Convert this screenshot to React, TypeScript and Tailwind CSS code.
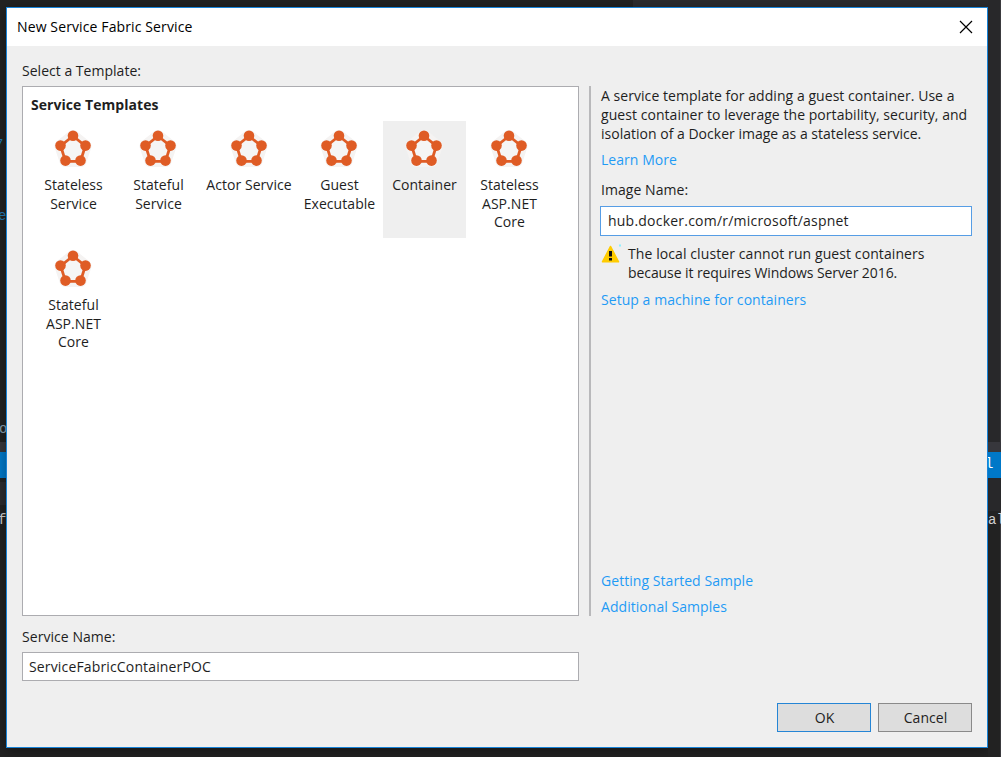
import type { ReactNode } from "react";

const templates = [
    { lines: ["Stateless", "Service"] },
    { lines: ["Stateful", "Service"] },
    { lines: ["Actor Service"], wide: true },
    { lines: ["Guest", "Executable"] },
    { lines: ["Container"], selected: true },
    { lines: ["Stateless", "ASP.NET", "Core"] },
    { lines: ["Stateful", "ASP.NET", "Core"] },
];

function FabricIcon() {
    return (
        <svg width="39" height="39" viewBox="0 0 39 39" className="block">
            <path
                d="M19 6 L31.5 16 L26.5 31 H11.5 L6.5 16 Z"
                fill="#f5f5f5"
                stroke="#f5f3f2"
                strokeWidth="12"
                strokeLinejoin="round"
            />
            <path d="M19 6 L31.3 16 L26.5 31.4 H11.5 L6.7 16 Z" fill="#f5f5f5" stroke="#df5c25" strokeWidth="2.8" />
            <g fill="#df5c25">
                <circle cx="19" cy="5.8" r="5.3" />
                <circle cx="31.5" cy="15.6" r="5.3" />
                <circle cx="26.5" cy="30.6" r="5.3" />
                <circle cx="11.5" cy="30.6" r="5.3" />
                <circle cx="6.5" cy="15.6" r="5.3" />
            </g>
        </svg>
    );
}

function WarningIcon() {
    return (
        <svg width="20" height="20" viewBox="0 0 20 20" className="-mt-px block shrink-0">
            <path d="M9.5 2.4 L17.6 17.8 H1.4 Z" fill="#fc0" stroke="#fc0" strokeWidth="1.4" strokeLinejoin="round" />
            <path d="M8 7 h3 v5.6 h-3 Z M8 14 h3 v2.4 h-3 Z" fill="#111" />
            <rect x="18" y="0.5" width="2" height="2" fill="#8ff0ff" />
        </svg>
    );
}

function Link({ children, className }: { children: ReactNode; className: string }) {
    return (
        <a href="#" className={`block w-fit whitespace-nowrap text-[#1f9bf5] ${className}`}>
            {children}
        </a>
    );
}

export default function App() {
    return (
        <div className="flex h-[757px] w-[1001px] overflow-hidden bg-[#222] bg-[linear-gradient(90deg,#222_633px,#2b2b2d_633px)] bg-[length:100%_442px] bg-no-repeat font-['Open_Sans','Noto_Sans',sans-serif] text-[14px] leading-[18.75px] tracking-[0.05px] text-[#1e1e1e]">
            {/* Editor showing on the left */}
            <div className="flex w-[6px] shrink-0 flex-col overflow-hidden font-['Liberation_Mono',monospace] text-[14px] leading-[18px]">
                <div className="flex h-[136px] shrink-0" />
                <span className="-ml-[5px] h-[71px] shrink-0 text-[#207ab5]">7</span>
                <span className="-ml-[2px] h-[213px] shrink-0 text-[#207ab5]">e</span>
                <span className="-ml-[1px] h-[22px] shrink-0 text-[#8aa0b0]">o</span>
                <div className="h-[10px] shrink-0 bg-[#37373c]" />
                <div className="h-[26px] shrink-0 bg-[#0078c8]" />
                <div className="h-[4px] shrink-0 bg-[#222]" />
                <div className="h-[23px] shrink-0 bg-[#2b2b2e]" />
                <span className="-ml-[2px] mt-[6px] text-[#d0d0d0]">f</span>
            </div>

            <div className="mt-[7px] flex h-[741px] w-[982px] shrink-0 flex-col border border-[#1883d7] bg-[#efefef] shadow-[0_3px_12px_rgba(0,0,0,0.35)]">
                <header className="flex h-[38px] shrink-0 items-center justify-between bg-white pl-[10px] pr-[14px] text-black">
                    <h1 className="tracking-[0.12px]">New Service Fabric Service</h1>
                    <svg width="14" height="14" viewBox="0 0 14 14" stroke="#000" strokeWidth="1.2">
                        <path d="M1 1 L13 13 M13 1 L1 13" />
                    </svg>
                </header>

                <div className="flex grow">
                    <section className="ml-[15px] flex w-[557px] shrink-0 flex-col pt-[16px]">
                        <h2 className="h-[24px] tracking-[0.02px]">Select a Template:</h2>
                        <div className="h-[530px] shrink-0 border border-[#acacb0] bg-white pl-[8px] pt-[9px]">
                            <h3 className="font-bold tracking-[0.05px]">Service Templates</h3>
                            <div className="mt-[6px] flex flex-wrap">
                                {templates.map(({ lines, wide, selected }) => (
                                    <div
                                        key={lines.join(" ")}
                                        className={`mx-px mb-[3px] flex h-[117px] flex-col items-center pt-[9px] ${wide ? "w-[94px]" : "w-[83px]"} ${selected ? "bg-[#efefef]" : ""}`}
                                    >
                                        <FabricIcon />
                                        <div className="mt-[7px] text-center">
                                            {lines.map((line) => (
                                                <div key={line} className="whitespace-nowrap">{line}</div>
                                            ))}
                                        </div>
                                    </div>
                                ))}
                            </div>
                        </div>
                        <label className="mt-[12px] h-[24px]">Service Name:</label>
                        <div className="flex h-[29px] shrink-0 items-center border border-[#acacb0] bg-white pl-[6px] pt-px tracking-[0.15px]">
                            ServiceFabricContainerPOC
                        </div>
                    </section>

                    <div className="ml-[10px] mt-[40px] h-[530px] w-[2px] shrink-0 bg-[#b9b9bb]" />

                    <section className="ml-[9px] flex w-[372px] shrink-0 flex-col pt-[41px]">
                        <p className="h-[64px] whitespace-nowrap pl-px">
                            A service template for adding a guest container. Use a<br />
                            guest container to leverage the portability, security, and<br />
                            <span className="tracking-[0.01px]">isolation of a Docker image as a stateless service.</span>
                        </p>
                        <Link className="ml-px h-[30px]">Learn More</Link>
                        <label className="h-[25px] pl-px">Image Name:</label>
                        <div className="flex h-[30px] shrink-0 items-center border border-[#569de5] bg-white pl-[7px] tracking-[0.22px]">
                            hub.docker.com/r/microsoft/aspnet
                        </div>
                        <div className="mt-[9px] flex gap-[8px] pl-px">
                            <WarningIcon />
                            <p className="-ml-px whitespace-nowrap tracking-[0.09px]">
                                The local cluster cannot run guest containers<br />
                                <span className="tracking-[-0.08px]">because it requires Windows Server 2016.</span>
                            </p>
                        </div>
                        <Link className="ml-px mt-[8px]">Setup a machine for containers</Link>
                        <div className="ml-px mt-auto flex flex-col">
                            <Link className="h-[26px]">Getting Started Sample</Link>
                            <Link className="h-[105px]">Additional Samples</Link>
                        </div>
                        <div className="mb-[15px] flex justify-end gap-[7px]">
                            <button className="h-[29px] w-[94px] border border-[#2585d5] bg-[#ddd] pl-px pt-px">OK</button>
                            <button className="h-[29px] w-[94px] border border-[#8a8a8a] bg-[#ddd] pl-px pt-px">Cancel</button>
                        </div>
                    </section>
                </div>
            </div>

            {/* Editor showing on the right */}
            <div className="flex w-[13px] shrink-0 flex-col overflow-hidden font-['Liberation_Mono',monospace] text-[14px] leading-[18px]">
                <div className="h-[442px] shrink-0 border-r border-[#3a3a3e] bg-[#28282a]" />
                <div className="h-[10px] shrink-0 bg-[#37373c]" />
                <div className="h-[26px] shrink-0 bg-[#0078c8] pt-[3px] text-white -indent-[3px]">l</div>
                <div className="h-[33px] shrink-0 bg-[#28282a]" />
                <div className="grow border-r border-[#3a3a3e] bg-[#222] text-[#d0d0d0]">al</div>
            </div>
        </div>
    );
}
